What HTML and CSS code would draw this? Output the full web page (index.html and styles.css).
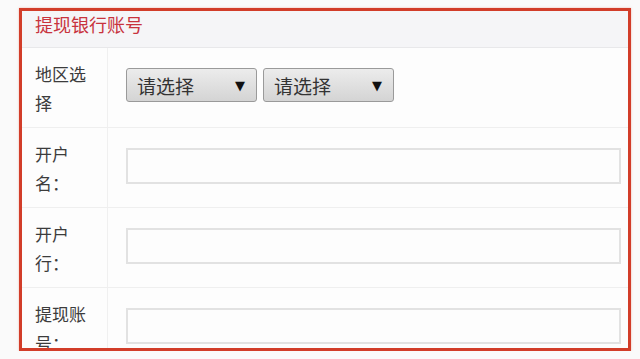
FILE: index.html
```html
<!DOCTYPE html>
<html lang="zh">
<head>
<meta charset="utf-8">
<link rel="stylesheet" href="styles.css">
</head>
<body>
<div class="panel">
  <div class="panel-head">提现银行账号</div>
  <div class="row">
    <div class="label">地区选择</div>
    <div class="field">
      <div class="select"><span>请选择</span><span class="arrow">▼</span></div>
      <div class="select"><span>请选择</span><span class="arrow">▼</span></div>
    </div>
  </div>
  <div class="row">
    <div class="label">开户名：</div>
    <div class="field"><input class="input" type="text"></div>
  </div>
  <div class="row">
    <div class="label">开户行：</div>
    <div class="field"><input class="input" type="text"></div>
  </div>
  <div class="row">
    <div class="label">提现账号：</div>
    <div class="field"><input class="input" type="text"></div>
  </div>
</div>
</body>
</html>
```
FILE: styles.css
```css
html, body {
  margin: 0;
  padding: 0;
  background: #fafafa;
}
body {
  padding: 8px 0 0 19px;
  font-family: "Noto Sans CJK SC", "Noto Sans", sans-serif;
  color: #444;
}
.panel {
  box-sizing: border-box;
  width: 612px;
  height: 343px;
  border: 3px solid #d23d29;
  background: #fdfdfd;
  overflow: hidden;
  box-shadow: 0 0 2px rgba(230, 120, 100, 0.5);
}
.panel-head {
  box-sizing: border-box;
  height: 37px;
  padding-left: 13px;
  font-size: 18px;
  line-height: 26px;
  color: #c8333d;
  background: #f5f5f7;
  border-bottom: 1px solid #e8e8ea;
}
.row {
  display: grid;
  grid-template-columns: 86px 1fr;
  height: 80px;
  box-sizing: border-box;
  border-bottom: 1px solid #efefef;
}
.label {
  box-sizing: border-box;
  padding: 0 14px 0 13px;
  border-right: 1px solid #f0f0f0;
  font-size: 17px;
  line-height: 29px;
  color: #3c3c3c;
  display: flex;
  align-items: center;
  word-break: break-all;
}
.field {
  display: flex;
  align-items: flex-start;
  gap: 6px;
  padding: 20px 4px 0 18px;
}
.select {
  box-sizing: border-box;
  width: 131px;
  height: 34px;
  display: flex;
  align-items: center;
  justify-content: space-between;
  padding: 0 11px 0 10px;
  border: 1px solid #9a9a9a;
  border-radius: 3px;
  background: linear-gradient(#ececec, #d4d4d4);
  font-size: 19px;
  color: #333;
}
.arrow {
  font-family: "DejaVu Sans", sans-serif;
  font-size: 13px;
  color: #111;
}
.input {
  box-sizing: border-box;
  width: 495px;
  height: 36px;
  margin: 0;
  border: 2px solid #e2e2e2;
  background: #fdfdfd;
  outline: none;
}
```
